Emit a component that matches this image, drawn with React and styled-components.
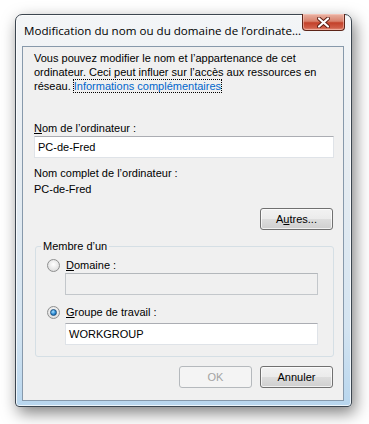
import React from 'react'
import styled, { createGlobalStyle } from 'styled-components'

const GlobalStyle = createGlobalStyle`
  html, body {
    margin: 0;
    background: #ffffff;
  }
  * {
    box-sizing: border-box;
  }
`

const Page = styled.div`
  padding: 14px 0 0 15px;
  height: 424px;
  font-family: "Liberation Sans", Arial, sans-serif;
  font-size: 11px;
  color: #000;
`

const Window = styled.div`
  width: 337px;
  height: 393px;
  display: flex;
  flex-direction: column;
  border: 1px solid #3c4650;
  border-radius: 7px 7px 4px 4px;
  background: linear-gradient(180deg, #f3f5f7 0%, #e6ecf1 40%, #d4e4f1 80%, #b8d6ee 100%);
  box-shadow: 3px 6px 16px rgba(0, 0, 0, 0.5), inset 0 0 0 1px rgba(255, 255, 255, 0.75);
`

const TitleBar = styled.div`
  height: 31px;
  display: flex;
  align-items: flex-start;
  justify-content: space-between;
  padding: 0 6px 0 8px;
`

const Title = styled.div`
  margin-top: 8px;
  font-family: "Open Sans", "Noto Sans", sans-serif;
  font-size: 11.6px;
  color: #000;
  white-space: nowrap;
`

const CloseButton = styled.div`
  width: 43px;
  height: 17px;
  margin-top: -1px;
  display: flex;
  align-items: center;
  justify-content: center;
  border: 1px solid #5c2418;
  border-top: none;
  border-radius: 0 0 4px 4px;
  background: linear-gradient(180deg, #e9b3a4 0%, #d9826d 45%, #c3412a 55%, #cf5d47 85%, #e3917b 100%);
  box-shadow: inset 0 0 0 1px rgba(255, 210, 200, 0.5);
`

const Client = styled.div`
  flex: 1;
  margin: 0 7px 5px 6px;
  padding: 4px 9px 0 11px;
  border: 1px solid #8799ab;
  background: #f0f0f0;
  display: flex;
  flex-direction: column;
`

const Text = styled.div`
  line-height: 14px;
  margin-top: ${p => p.$top || 0}px;
`

const Link = styled.span`
  color: #0066cc;
  outline: 1px dotted #000;
  outline-offset: 0;
`

const Key = styled.span`
  text-decoration: underline;
  text-underline-offset: 1px;
`

const Input = styled.div`
  height: 22px;
  margin-top: ${p => p.$top || 0}px;
  margin-left: ${p => p.$left || 0}px;
  padding: 3px 3px 0;
  line-height: 14px;
  border: 1px solid ${p => (p.$disabled ? '#c3c7cb' : '#dfe3e8')};
  border-top-color: ${p => (p.$disabled ? '#b3b7bb' : '#abadb3')};
  background: ${p => (p.$disabled ? '#f0f0f0' : '#ffffff')};
`

const ButtonRow = styled.div`
  display: flex;
  justify-content: flex-end;
  gap: 8px;
  padding-right: 1px;
  margin-top: ${p => p.$top || 0}px;
`

const Button = styled.div`
  width: 73px;
  height: 22px;
  display: flex;
  align-items: center;
  justify-content: center;
  border: 1px solid ${p => (p.$disabled ? '#b5b9bd' : '#707070')};
  border-radius: 3px;
  color: ${p => (p.$disabled ? '#a3a3a3' : '#000')};
  background: ${p =>
    p.$disabled
      ? '#f4f4f4'
      : 'linear-gradient(180deg, #f2f2f2 0%, #ebebeb 50%, #dddddd 51%, #cfcfcf 100%)'};
  box-shadow: inset 0 0 0 1px ${p => (p.$disabled ? '#f4f4f4' : 'rgba(255,255,255,0.7)')};
`

const Group = styled.fieldset`
  margin: 9px 0 0 1px;
  padding: 5px 15px 11px 11px;
  border: 1px solid #d5dfe5;
  border-radius: 3px;
  min-width: 0;
`

const Legend = styled.legend`
  padding: 0 2px;
  margin-left: -6px;
  line-height: 14px;
`

const RadioRow = styled.label`
  display: flex;
  align-items: center;
  gap: 6px;
  height: 14px;
  margin-top: ${p => p.$top || 0}px;
`

const Radio = styled.span`
  width: 13px;
  height: 13px;
  border-radius: 50%;
  border: 1px solid #8e8f8f;
  background: radial-gradient(circle at 50% 40%, #ffffff 0%, #e6e6e6 60%, #cfcfcf 100%);
  display: flex;
  align-items: center;
  justify-content: center;
  &::after {
    content: '';
    width: 5px;
    height: 5px;
    border-radius: 50%;
    display: ${p => (p.$checked ? 'block' : 'none')};
    background: radial-gradient(circle at 40% 35%, #a9e0ff 0%, #2a8ad4 55%, #0d4c8a 100%);
    border: 1px solid #1c5180;
  }
`

const App = () => {
  return (
    <Page>
      <GlobalStyle />
      <Window>
        <TitleBar>
          <Title>Modification du nom ou du domaine de l’ordinate...</Title>
          <CloseButton>
            <svg width="13" height="11" viewBox="0 0 13 11">
              <path d="M2 1.5 L11 9.5 M11 1.5 L2 9.5" stroke="#5a1c12" strokeWidth="4" strokeLinecap="round" />
              <path d="M2 1.5 L11 9.5 M11 1.5 L2 9.5" stroke="#ffffff" strokeWidth="2.2" strokeLinecap="round" />
            </svg>
          </CloseButton>
        </TitleBar>
        <Client>
          <Text>
            Vous pouvez modifier le nom et l’appartenance de cet ordinateur. Ceci peut influer sur l’accès aux
            ressources en réseau. <Link>Informations complémentaires</Link>
          </Text>
          <Text $top={28}>
            <Key>N</Key>om de l’ordinateur :
          </Text>
          <Input $top={1}>PC-de-Fred</Input>
          <Text $top={8}>Nom complet de l’ordinateur :</Text>
          <Text $top={2}>PC-de-Fred</Text>
          <ButtonRow $top={12}>
            <Button>
              <span>
                A<Key>u</Key>tres...
              </span>
            </Button>
          </ButtonRow>
          <Group>
            <Legend>Membre d’un</Legend>
            <RadioRow>
              <Radio />
              <span>
                <Key>D</Key>omaine :
              </span>
            </RadioRow>
            <Input $top={1} $left={18} $disabled />
            <RadioRow $top={10}>
              <Radio $checked />
              <span>
                <Key>G</Key>roupe de travail :
              </span>
            </RadioRow>
            <Input $top={4} $left={18}>WORKGROUP</Input>
          </Group>
          <ButtonRow $top={9}>
            <Button $disabled>OK</Button>
            <Button>Annuler</Button>
          </ButtonRow>
        </Client>
      </Window>
    </Page>
  )
}

export default App
